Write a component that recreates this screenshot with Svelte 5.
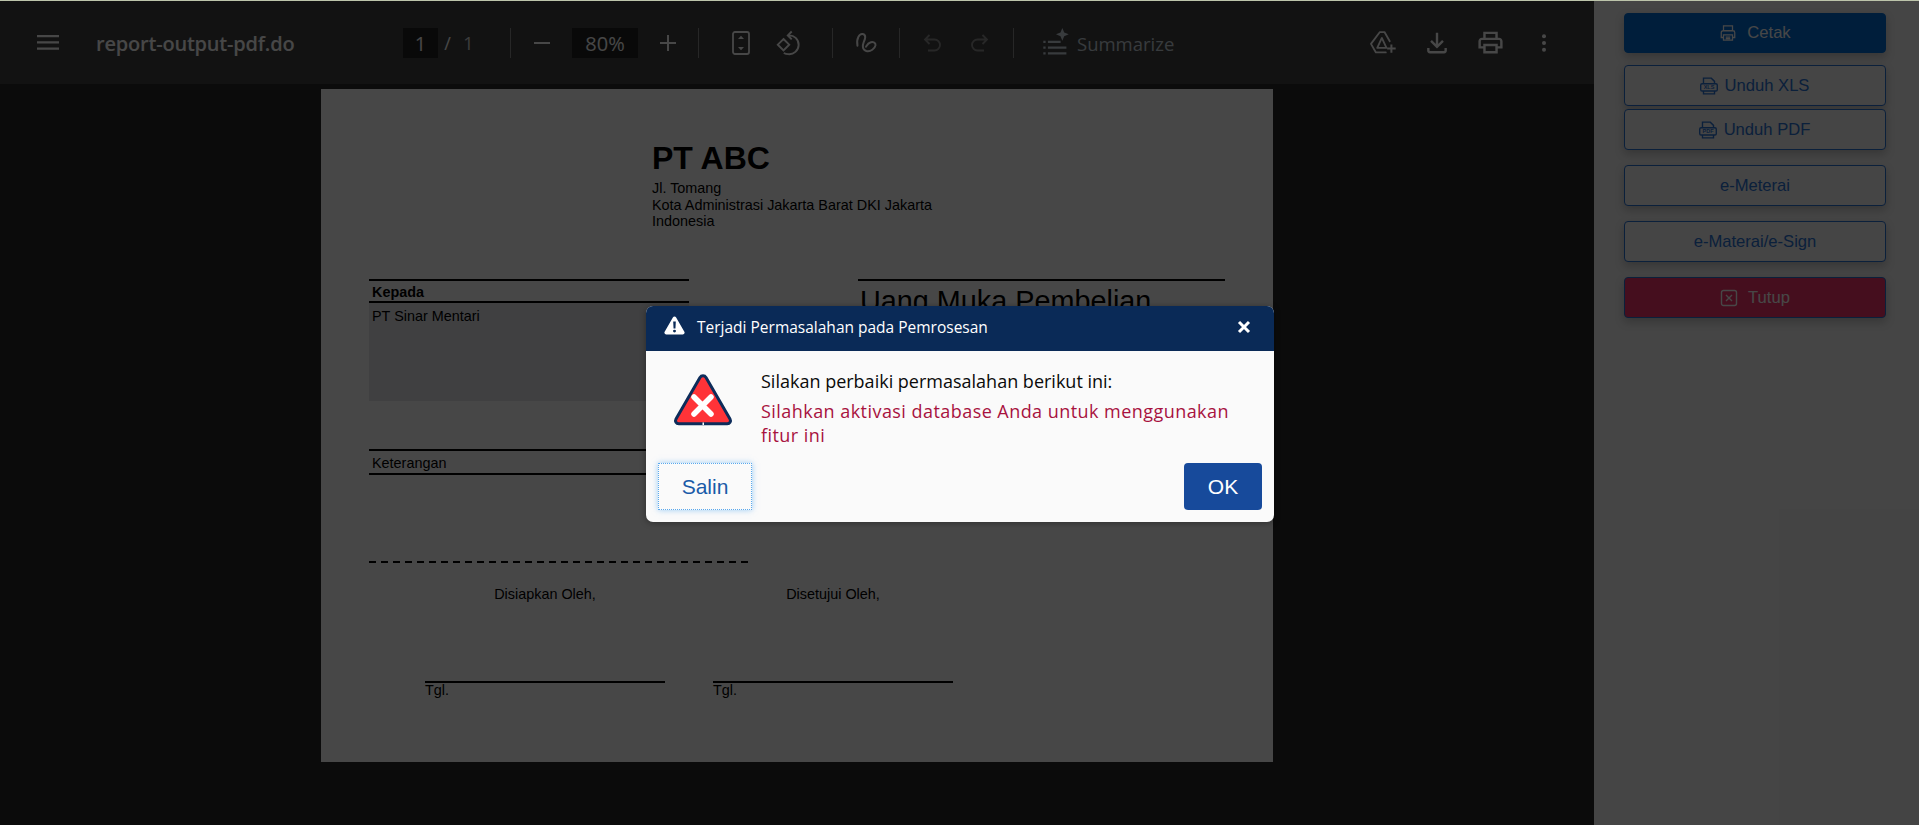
<script>
  const sideBtns = [
    { label: 'Cetak', kind: 'primary', icon: 'print', cls: 'first' },
    { label: 'Unduh XLS', kind: 'outline', icon: 'XLS', cls: 'g12' },
    { label: 'Unduh PDF', kind: 'outline', icon: 'PDF', cls: 'g3' },
    { label: 'e-Meterai', kind: 'outline', icon: '', cls: 'g15' },
    { label: 'e-Materai/e-Sign', kind: 'outline', icon: '', cls: 'g15' },
    { label: 'Tutup', kind: 'danger', icon: 'close', cls: 'g15' }
  ];
</script>

<div class="app">
  <main class="viewer">
    <header class="toolbar">
      <button class="ib menu" aria-label="Menu">
        <svg viewBox="0 0 22 15" width="22" height="15"><path fill="currentColor" d="M0 0h22v2.200H0zM0 6.300h22v2.200H0zM0 12.600h22v2.200H0z"/></svg>
      </button>
      <span class="title">report-output-pdf.do</span>
      <span class="box pageno">1</span>
      <span class="slash">/</span>
      <span class="total">1</span>
      <span class="sep s1"></span>
      <button class="ib minus" aria-label="Zoom out">
        <svg viewBox="0 0 24 24" width="24" height="24"><path fill="currentColor" d="M4 11h16v2H4z"/></svg>
      </button>
      <span class="box zoomv">80%</span>
      <button class="ib plus" aria-label="Zoom in">
        <svg viewBox="0 0 24 24" width="24" height="24"><path fill="currentColor" d="M11 4h2v7h7v2h-7v7h-2v-7H4v-2h7z"/></svg>
      </button>
      <span class="sep s2"></span>
      <button class="ib fit" aria-label="Fit">
        <svg viewBox="0 0 18 24" width="18" height="24"><rect x="1" y="1" width="16" height="22" rx="2" fill="none" stroke="currentColor" stroke-width="1.800"/><path fill="currentColor" d="M9 4.800l3 3.200H6zM9 19.200l-3-3.200h6z"/></svg>
      </button>
      <button class="ib rot" aria-label="Rotate">
        <svg viewBox="0 0 26 26" width="26" height="26"><path fill="none" stroke="currentColor" stroke-width="1.900" d="M7.500 9l5.700 5.700-5.700 5.700-5.700-5.700zM12.500 5.400a9.400 9.400 0 1 1-.4 18.700c-1.600 0-3-.4-4.300-1.100M15.700 1.500l-3.900 3.900 3.900 3.900"/></svg>
      </button>
      <span class="sep s3"></span>
      <button class="ib draw" aria-label="Draw">
        <svg viewBox="400 33 75 70" width="25" height="23"><path fill="none" stroke="currentColor" stroke-width="6" stroke-linecap="round" stroke-linejoin="round" d="M410 78C406 56 416 40 426 42c13 3 6 18 3 25-4 10-5 23 8 27 13 3 26-7 28-18 1-8-9-11-16-8-8 3-10 9-13 13"/></svg>
      </button>
      <span class="sep s4"></span>
      <button class="ib undo" aria-label="Undo">
        <svg viewBox="0 0 24 24" width="24" height="24"><path fill="none" stroke="currentColor" stroke-width="1.800" d="M9.500 4L5 8.500l4.500 4.500M5 8.500h9.500a5.500 5.500 0 0 1 0 11H8"/></svg>
      </button>
      <button class="ib redo" aria-label="Redo">
        <svg viewBox="0 0 24 24" width="24" height="24"><path fill="none" stroke="currentColor" stroke-width="1.800" d="M14.500 4L19 8.500 14.500 13M19 8.500H9.500a5.500 5.500 0 0 0 0 11H16"/></svg>
      </button>
      <span class="sep s5"></span>
      <span class="summ">
        <svg viewBox="0 0 26 26" width="30" height="30"><path fill="currentColor" d="M2 11h2v2H2zM2 16h2v2H2zM2 21h2v2H2zM6 11h11v2H6zM6 16h16v2H6zM6 21h16v2H6zM18.500 0l1.600 3.900L24 5.500l-3.900 1.600L18.500 11l-1.600-3.900L13 5.500l3.900-1.600z"/></svg>
        <span class="tx">Summarize</span>
      </span>
      <div class="tright">
        <button class="ib" aria-label="Save to Drive">
          <svg class="drive" viewBox="25 32 85 74" width="28" height="24.500"><path fill="none" stroke="currentColor" stroke-width="5.500" stroke-linejoin="round" stroke-linecap="round" d="M88 66L72 38H58L31 74l15 26h30M64 56L50 86h28z"/><path fill="currentColor" d="M90 76h6v9h10v6H96v10h-6V91H80v-6h10z"/></svg>
        </button>
        <button class="ib" aria-label="Download">
          <svg viewBox="0 0 24 24" width="26" height="26"><path fill="none" stroke="currentColor" stroke-width="2.200" d="M12 2.500v13M6.500 10l5.500 5.500 5.500-5.500M4 16.500v2.500a1.500 1.500 0 0 0 1.500 1.500h13a1.500 1.500 0 0 0 1.500-1.500v-2.500"/></svg>
        </button>
        <button class="ib" aria-label="Print">
          <svg viewBox="0 0 24 24" width="29" height="29"><path fill="currentColor" d="M19 8h-1V3H6v5H5c-1.660 0-3 1.340-3 3v6h4v4h12v-4h4v-6c0-1.660-1.340-3-3-3zM8 5h8v3H8V5zm8 12v2H8v-4h8v2zm2-2v-2H6v2H4v-4c0-.55.45-1 1-1h14c.55 0 1 .45 1 1v4h-2z"/></svg>
        </button>
        <button class="ib" aria-label="More">
          <svg viewBox="0 0 24 24" width="24" height="24"><circle cx="12" cy="5.300" r="2" fill="currentColor"/><circle cx="12" cy="12" r="2" fill="currentColor"/><circle cx="12" cy="18.700" r="2" fill="currentColor"/></svg>
        </button>
      </div>
    </header>

    <article class="page">
      <div class="letterhead">
        <h1>PT ABC</h1>
        <p>Jl. Tomang</p>
        <p>Kota Administrasi Jakarta Barat DKI Jakarta</p>
        <p>Indonesia</p>
      </div>
      <div class="parties">
        <div class="to">
          <div class="th">Kepada</div>
          <div class="grey">PT Sinar Mentari</div>
        </div>
        <div class="doctitle">Uang Muka Pembelian</div>
      </div>
      <div class="note">Keterangan</div>
      <div class="dash"></div>
      <div class="signs">
        <div class="sign">
          <div class="who">Disiapkan Oleh,</div>
          <div class="tgl">Tgl.</div>
        </div>
        <div class="sign">
          <div class="who">Disetujui Oleh,</div>
          <div class="tgl">Tgl.</div>
        </div>
      </div>
    </article>
  </main>

  <aside class="side">
    {#each sideBtns as b}
      <button class="sb {b.kind} {b.cls}">
        {#if b.icon === 'print'}
          <svg viewBox="0 0 20 20" width="18" height="18"><path fill="none" stroke="currentColor" stroke-width="1.400" d="M5 7V2h10v5M5 15H2.500V9.500A2 2 0 0 1 4.500 7.500h11a2 2 0 0 1 2 2V15H15M5 12h10v6H5zM7.500 14.500h5M7.500 16.300h5"/></svg>
        {:else if b.icon === 'close'}
          <svg viewBox="0 0 18 18" width="18" height="18"><rect x="1.500" y="1.500" width="15" height="15" rx="2" fill="none" stroke="currentColor" stroke-width="1.400"/><path fill="none" stroke="currentColor" stroke-width="1.400" d="M6 6l6 6M12 6l-6 6"/></svg>
        {:else if b.icon}
          <svg class="file" viewBox="0 0 20 20" width="16" height="16">
            <path fill="none" stroke="currentColor" stroke-width="1.500" d="M4 7.500V1.500h8.500L16 5v2.500M4 15.500v3h12v-3"/>
            <rect x="1" y="7.500" width="18" height="8" rx="1.500" fill="none" stroke="currentColor" stroke-width="1.500"/>
            <text x="10" y="13.700" text-anchor="middle" fill="currentColor" font-family="Liberation Sans, sans-serif" font-size="6" font-weight="700">{b.icon}</text>
          </svg>
        {/if}
        <span>{b.label}</span>
      </button>
    {/each}
  </aside>

  <div class="scrim"></div>

  <section class="dialog">
    <div class="dh">
      <svg class="warn" viewBox="0 0 24 22" width="21" height="19"><path fill="#fff" fill-rule="evenodd" d="M12 .5c.8 0 1.500.4 1.900 1.100l9.500 16.500c.9 1.500-.2 3.400-1.900 3.400H2.500C.8 21.500-.3 19.600.6 18.100L10.100 1.600C10.500.9 11.200.5 12 .5zM10.500 6.500l.4 8h2.200l.4-8zM12 15.800a1.700 1.700 0 1 0 0 3.400 1.700 1.700 0 0 0 0-3.400z"/></svg>
      <span class="dt">Terjadi Permasalahan pada Pemrosesan</span>
      <svg class="x" viewBox="0 0 14 14" width="14" height="14"><path stroke="#fff" stroke-width="3" d="M2 2l10 10M12 2L2 12"/></svg>
    </div>
    <div class="db">
      <svg class="big" viewBox="0 0 60 54" width="60" height="54">
        <path d="M27 4.500c1.400-2.200 4.600-2.200 6 0L57 46c1.300 2.300-.2 4.800-2.800 4.800H5.800C3.200 50.800 1.700 48.300 3 46z" fill="#ff3338" stroke="#0d2c5a" stroke-width="3" stroke-linejoin="round"/>
        <path d="M21 24l17 17M38 24L21 41" stroke="#fff" stroke-width="5.500" stroke-linecap="round"/>
        <rect x="29.500" y="49.500" width="1.500" height="2.500" fill="#fafafa"/>
      </svg>
      <div class="msg">
        <p class="m1">Silakan perbaiki permasalahan berikut ini:</p>
        <p class="m2">Silahkan aktivasi database Anda untuk menggunakan fitur ini</p>
      </div>
    </div>
    <div class="df">
      <button class="salin">Salin</button>
      <button class="ok">OK</button>
    </div>
  </section>
</div>

<style>
  :global(body) { margin: 0; background: #fff; }
  * { box-sizing: border-box; }
  p, h1 { margin: 0; }
  button { font: inherit; background: none; border: 0; padding: 0; color: inherit; }

  .app { position: relative; display: flex; width: 1919px; height: 825px; overflow: hidden; border-top: 1px solid #bcc4aa; }

  .viewer { width: 1594px; height: 824px; background: #282828; flex: none; }

  .toolbar { display: flex; align-items: center; height: 83px; background: #424242; color: #fff; font-family: "Open Sans", "Noto Sans", sans-serif; }
  .ib { display: flex; align-items: center; justify-content: center; width: 32px; height: 32px; flex: none; }
  .menu { margin-left: 32px; }
  .title { margin-left: 32px; width: 307px; padding-top: 2px; font-size: 20px; font-weight: 600; letter-spacing: -.2px; }
  .box { display: flex; align-items: center; justify-content: center; height: 30px; padding-top: 1px; background: #222; font-size: 20px; }
  .pageno { width: 35px; }
  .slash { width: 19px; padding-top: 1px; text-align: center; font-size: 18px; }
  .total { width: 23px; padding-top: 1px; text-align: center; font-size: 18px; color: #d8d8d8; }
  .sep { width: 1px; height: 30px; background: #8d8d8d; flex: none; }
  .s1 { margin-left: 30px; }
  .minus { margin-left: 15px; }
  .zoomv { width: 66px; margin-left: 14px; }
  .plus { margin-left: 14px; }
  .s2 { margin-left: 14px; }
  .fit { margin-left: 26px; }
  .rot { margin-left: 16px; }
  .s3 { margin-left: 27px; }
  .draw { margin-left: 17px; }
  .s4 { margin-left: 17px; }
  .undo { margin-left: 16px; color: #8e8e8e; }
  .redo { margin-left: 16px; color: #8e8e8e; }
  .s5 { margin-left: 17px; }
  .summ { display: flex; align-items: center; gap: 6px; margin-left: 27px; color: #c8d2dc; font-size: 18.500px; }
  .tx { padding-top: 2px; }
  .tright { margin-left: auto; margin-right: 34px; display: flex; gap: 21.500px; }
  .drive { margin-left: -2px; }

  .page { width: 952px; height: 673px; margin: 5px auto 0; background: #fff; color: #000; padding-left: 48px; font-family: "Liberation Sans", Arial, sans-serif; font-size: 14.400px; overflow: hidden; }
  .letterhead { margin-left: 283px; padding-top: 50px; height: 190px; line-height: 16.700px; }
  .letterhead h1 { font-size: 32px; line-height: 38px; font-weight: 700; margin-bottom: 3px; }
  .parties { display: flex; height: 170px; }
  .to { width: 320px; border-top: 2px solid #000; }
  .th { height: 22px; line-height: 22px; padding-left: 3px; font-weight: 700; border-bottom: 2px solid #000; }
  .grey { height: 98px; background: #e4e6ea; padding: 5px 3px; line-height: 16px; }
  .doctitle { width: 367px; margin-left: 169px; border-top: 2px solid #000; font-size: 28.800px; line-height: 36px; padding: 2px 2px; }
  .note { width: 320px; height: 26px; border-top: 2px solid #000; border-bottom: 2px solid #000; padding-left: 3px; line-height: 24px; }
  .dash { width: 379px; height: 2px; margin-top: 86px; background: repeating-linear-gradient(90deg, #000 0 7px, transparent 7px 12px); }
  .signs { display: grid; grid-template-columns: 240px 240px; column-gap: 48px; margin: 23px 0 0 56px; }
  .who { text-align: center; height: 95px; line-height: 17px; }
  .tgl { border-top: 2px solid #000; line-height: 15px; }

  .side { flex: 1; height: 824px; background: #f6f6f6; padding: 12px 33px 0 30px; font-family: "Liberation Sans", Arial, sans-serif; font-size: 16.600px; }
  .sb { display: flex; align-items: center; justify-content: center; gap: 10px; width: 262px; height: 41px; border-radius: 4px; border: 1px solid #2a72d4; box-shadow: 0 4px 10px rgba(0,0,0,.22); }
  .file { transform: scale(1.150); margin-right: -2px; }
  .first { height: 40px; }
  .g12 { margin-top: 12px; }
  .g3 { margin-top: 3px; }
  .g15 { margin-top: 15px; }
  .primary { background: #006bd5; border-color: #006bd5; color: #fff; }
  .outline { background: #f6f6f6; color: #2a72d4; }
  .danger { background: #f7356b; color: #fff; }

  .scrim { position: absolute; inset: 0; background: rgba(0,0,0,.72); }

  .dialog { position: absolute; left: 646px; top: 305px; width: 628px; height: 216px; border-radius: 7px; overflow: hidden; background: #fafafa; box-shadow: 0 1px 6px rgba(0,0,0,.35); font-family: "Open Sans", "Noto Sans", sans-serif; }
  .dh { display: flex; align-items: center; height: 45px; padding: 0 23px 4px 18px; background: #0a2a57; color: #fff; }
  .warn { flex: none; margin-bottom: 3px; }
  .dt { margin-left: 12px; font-size: 15.500px; }
  .x { margin-left: auto; }
  .db { display: flex; align-items: flex-start; height: 112px; padding: 22px 0 0 27px; }
  .big { flex: none; }
  .msg { margin-left: 28px; margin-top: -4px; width: 474px; font-size: 18px; line-height: 24px; }
  .m1 { color: #0a0a0a; }
  .m2 { color: #a8123f; margin-top: 6px; letter-spacing: .45px; }
  .df { display: flex; justify-content: space-between; padding: 0 12px; font-family: "Liberation Sans", Arial, sans-serif; font-size: 21px; }
  .salin { width: 94px; height: 47px; color: #1a5aa8; border: 1px dotted #5aa9ee; box-shadow: 0 0 6px rgba(90,170,240,.6); background: #fafafa; }
  .ok { width: 78px; height: 47px; border-radius: 4px; background: #174a9b; color: #fff; }
</style>
